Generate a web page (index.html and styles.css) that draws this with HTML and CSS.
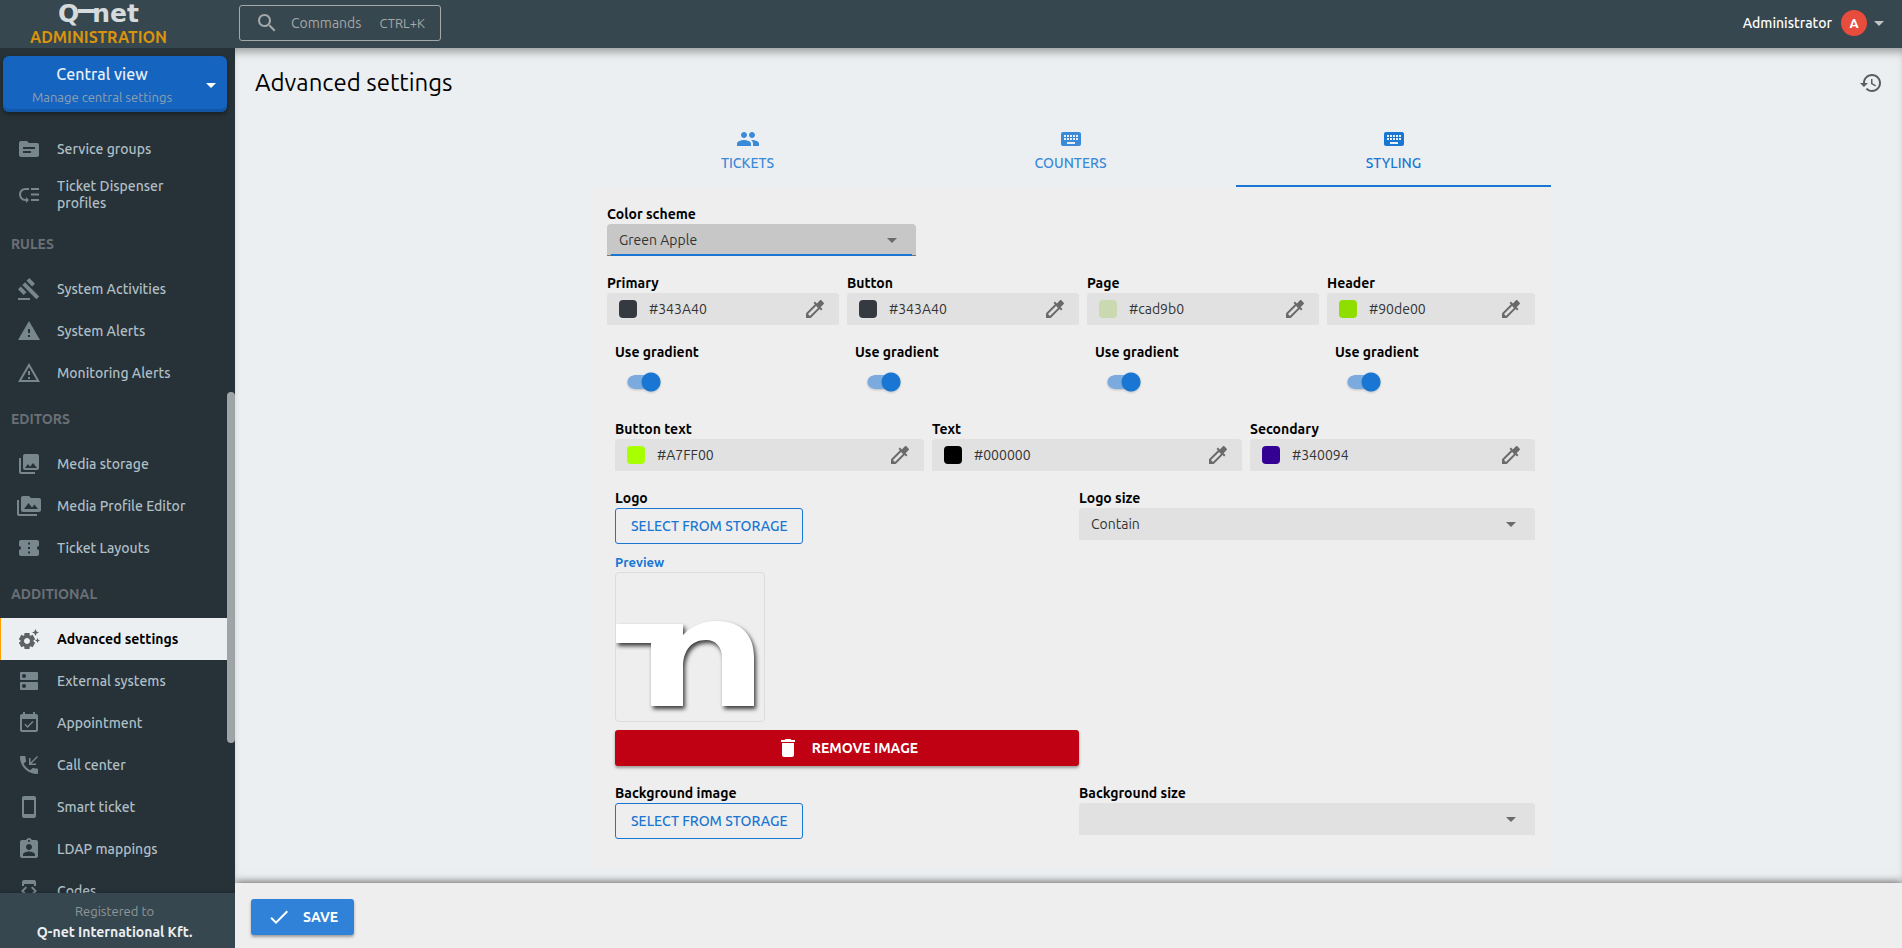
FILE: index.html
```html
<!DOCTYPE html>
<html lang="en">
<head>
<meta charset="utf-8">
<title>Advanced settings</title>
<link rel="stylesheet" href="styles.css">
</head>
<body>
<svg class="sprite" aria-hidden="true">
  <symbol id="picker" viewBox="0 0 24 24"><path d="M20.71 5.63l-2.34-2.34c-.39-.39-1.02-.39-1.41 0l-3.12 3.12-1.93-1.91-1.41 1.41 1.42 1.42L3 16.25V21h4.75l8.92-8.92 1.42 1.42 1.41-1.41-1.92-1.92 3.12-3.12c.4-.4.4-1.03.01-1.42zM6.92 19L5 17.08l8.06-8.06 1.92 1.92L6.92 19z"/></symbol>
  <symbol id="arrow" viewBox="0 0 24 24"><path d="M7 10l5 5 5-5z"/></symbol>
  <symbol id="keyboard" viewBox="0 0 24 24"><path d="M20 5H4c-1.1 0-1.99.9-1.99 2L2 17c0 1.1.9 2 2 2h16c1.1 0 2-.9 2-2V7c0-1.1-.9-2-2-2zm-9 3h2v2h-2V8zm0 3h2v2h-2v-2zM8 8h2v2H8V8zm0 3h2v2H8v-2zm-1 2H5v-2h2v2zm0-3H5V8h2v2zm9 7H8v-2h8v2zm0-4h-2v-2h2v2zm0-3h-2V8h2v2zm3 3h-2v-2h2v2zm0-3h-2V8h2v2z"/></symbol>
</svg>

<header class="topbar">
  <a class="brand" href="#">
    <span class="brand-logo" aria-label="Q-net">Q<span class="brand-dash"></span>net</span>
    <span class="brand-sub">ADMINISTRATION</span>
  </a>
  <button class="command" type="button">
    <svg class="icon" viewBox="0 0 24 24"><path d="M15.5 14h-.79l-.28-.27C15.41 12.59 16 11.11 16 9.5 16 5.91 13.09 3 9.5 3S3 5.91 3 9.5 5.91 16 9.5 16c1.61 0 3.09-.59 4.23-1.57l.27.28v.79l5 4.99L20.49 19l-4.99-5zm-6 0C7.01 14 5 11.99 5 9.5S7.01 5 9.5 5 14 7.01 14 9.5 11.99 14 9.5 14z"/></svg>
    <span class="command-name">Commands</span>
    <span class="command-key">CTRL+K</span>
  </button>
  <button class="user" type="button">
    <span>Administrator</span>
    <span class="avatar">A</span>
    <svg class="icon user-arrow"><use href="#arrow"/></svg>
  </button>
</header>

<div class="body">
  <aside class="sidebar">
    <button class="view-switch" type="button">
      <span class="view-text">
        <span class="view-name">Central view</span>
        <span class="view-hint">Manage central settings</span>
      </span>
      <svg class="icon"><use href="#arrow"/></svg>
    </button>
    <nav class="nav">
      <a class="nav-item" href="#"><svg class="icon" viewBox="0 0 24 24"><path d="M20 6h-8l-2-2H4c-1.1 0-1.99.9-1.99 2L2 18c0 1.1.9 2 2 2h16c1.1 0 2-.9 2-2V8c0-1.1-.9-2-2-2zm-6 10H6v-2h8v2zm4-4H6v-2h12v2z"/></svg><span>Service groups</span></a>
      <a class="nav-item nav-item-tall" href="#"><svg class="icon" viewBox="0 0 24 24"><path d="M14 5h8v2h-8zm0 5.500h8v2h-8zm0 5.500h8v2h-8zM2 11.500C2 15.080 4.920 18 8.500 18H9v2l3-3-3-3v2h-.5C6.020 16 4 13.980 4 11.500S6.020 7 8.500 7H12V5H8.500C4.920 5 2 7.920 2 11.500z"/></svg><span>Ticket Dispenser profiles</span></a>
      <h2 class="nav-title">RULES</h2>
      <a class="nav-item" href="#"><svg class="icon" viewBox="0 0 24 24"><path d="M1 21h12v2H1zM5.245 8.070l2.830-2.827 14.140 14.142-2.828 2.828zM12.317 1l5.657 5.656-2.830 2.830-5.654-5.660zM3.825 9.485l5.657 5.657-2.828 2.828-5.657-5.657z"/></svg><span>System Activities</span></a>
      <a class="nav-item" href="#"><svg class="icon" viewBox="0 0 24 24"><path d="M1 21h22L12 2 1 21zm12-3h-2v-2h2v2zm0-4h-2v-4h2v4z"/></svg><span>System Alerts</span></a>
      <a class="nav-item" href="#"><svg class="icon" viewBox="0 0 24 24"><path d="M12 5.990L19.530 19H4.470L12 5.990M12 2L1 21h22L12 2zm1 14h-2v2h2v-2zm0-6h-2v4h2v-4z"/></svg><span>Monitoring Alerts</span></a>
      <h2 class="nav-title">EDITORS</h2>
      <a class="nav-item" href="#"><svg class="icon" viewBox="0 0 24 24"><path d="M22 16V4c0-1.1-.9-2-2-2H8c-1.1 0-2 .9-2 2v12c0 1.1.9 2 2 2h12c1.1 0 2-.9 2-2zm-11-4l2.03 2.71L16 11l4 5H8l3-4zM2 6v14c0 1.1.9 2 2 2h14v-2H4V6H2z"/></svg><span>Media storage</span></a>
      <a class="nav-item" href="#"><svg class="icon" viewBox="0 0 24 24"><path d="M2 6H0v5h.01L0 20c0 1.1.9 2 2 2h18v-2H2V6zm20-2h-8l-2-2H6c-1.1 0-1.99.9-1.99 2L4 16c0 1.1.9 2 2 2h16c1.1 0 2-.9 2-2V6c0-1.1-.9-2-2-2zM7 15l4.5-6 3.5 4.51 2.5-3.01L21 15H7z"/></svg><span>Media Profile Editor</span></a>
      <a class="nav-item" href="#"><svg class="icon" viewBox="0 0 24 24"><path d="M22 10V6c0-1.11-.9-2-2-2H4c-1.1 0-1.99.89-1.99 2v4c1.1 0 1.99.9 1.99 2s-.89 2-2 2v4c0 1.1.9 2 2 2h16c1.1 0 2-.9 2-2v-4c-1.1 0-2-.9-2-2s.9-2 2-2zm-9 7.5h-2v-2h2v2zm0-4.5h-2v-2h2v2zm0-4.5h-2v-2h2v2z"/></svg><span>Ticket Layouts</span></a>
      <h2 class="nav-title">ADDITIONAL</h2>
      <a class="nav-item nav-item-active" href="#" aria-current="page"><svg class="icon" viewBox="0 0 24 24"><path d="M17.41 6.59L15 5.5l2.41-1.09L18.5 2l1.09 2.41L22 5.5l-2.41 1.09L18.5 9l-1.09-2.41zm3.87 6.13L20.5 11l-.78 1.72-1.72.78 1.72.78.78 1.72.78-1.72L23 13.5l-1.72-.78zm-5.04 1.65l1.94 1.47-2.5 4.33-2.24-.94c-.2.13-.42.26-.64.37l-.3 2.4h-5l-.3-2.41c-.22-.11-.43-.23-.64-.37l-2.24.94-2.5-4.33 1.94-1.47c-.01-.11-.01-.24-.01-.36s0-.25.01-.37l-1.94-1.47 2.5-4.33 2.24.94c.2-.13.42-.26.64-.37L7.5 6h5l.3 2.41c.22.11.43.23.64.37l2.24-.94 2.5 4.33-1.94 1.47c.01.12.01.24.01.37s0 .24-.01.36zM13 14c0-1.66-1.34-3-3-3s-3 1.34-3 3 1.34 3 3 3 3-1.34 3-3z"/></svg><span>Advanced settings</span></a>
      <a class="nav-item" href="#"><svg class="icon" viewBox="0 0 24 24"><path d="M20 13H4c-.55 0-1 .45-1 1v6c0 .55.45 1 1 1h16c.55 0 1-.45 1-1v-6c0-.55-.45-1-1-1zM7 19c-1.1 0-2-.9-2-2s.9-2 2-2 2 .9 2 2-.9 2-2 2zM20 3H4c-.55 0-1 .45-1 1v6c0 .55.45 1 1 1h16c.55 0 1-.45 1-1V4c0-.55-.45-1-1-1zM7 9c-1.1 0-2-.9-2-2s.9-2 2-2 2 .9 2 2-.9 2-2 2z"/></svg><span>External systems</span></a>
      <a class="nav-item" href="#"><svg class="icon" viewBox="0 0 24 24"><path d="M16.53 11.06L15.47 10l-4.88 4.88-2.12-2.12-1.06 1.06L10.59 17l5.94-5.94zM19 3h-1V1h-2v2H8V1H6v2H5c-1.11 0-1.99.9-1.99 2L3 19c0 1.1.89 2 2 2h14c1.1 0 2-.9 2-2V5c0-1.1-.9-2-2-2zm0 16H5V8h14v11z"/></svg><span>Appointment</span></a>
      <a class="nav-item" href="#"><svg class="icon" viewBox="0 0 24 24"><path d="M20 15.5c-1.25 0-2.45-.2-3.57-.57-.35-.11-.74-.03-1.02.24l-2.2 2.2c-2.83-1.44-5.15-3.75-6.59-6.58l2.2-2.21c.28-.27.36-.66.25-1.01C8.7 6.45 8.5 5.25 8.5 4c0-.55-.45-1-1-1H4c-.55 0-1 .45-1 1 0 9.39 7.61 17 17 17 .55 0 1-.45 1-1v-3.5c0-.55-.45-1-1-1zM20.900 4L20 3.100l-6.500 6.400V5H12v7h7v-1.500h-4.500z"/></svg><span>Call center</span></a>
      <a class="nav-item" href="#"><svg class="icon" viewBox="0 0 24 24"><path d="M17 1.010L7 1c-1.100 0-1.990.9-1.990 2v18c0 1.100.89 2 1.990 2h10c1.100 0 2-.9 2-2V3c0-1.100-.9-1.990-2-1.990zM17 19H7V5h10v14z"/></svg><span>Smart ticket</span></a>
      <a class="nav-item" href="#"><svg class="icon" viewBox="0 0 24 24"><path d="M19 3h-4.180C14.400 1.840 13.300 1 12 1c-1.300 0-2.400.84-2.820 2H5c-1.100 0-2 .9-2 2v14c0 1.100.9 2 2 2h14c1.100 0 2-.9 2-2V5c0-1.100-.9-2-2-2zm-7 0c.55 0 1 .45 1 1s-.45 1-1 1-1-.45-1-1 .45-1 1-1zm0 4c1.660 0 3 1.340 3 3s-1.340 3-3 3-3-1.340-3-3 1.340-3 3-3zm6 12H6v-1.400c0-2 4-3.100 6-3.100s6 1.100 6 3.100V19z"/></svg><span>LDAP mappings</span></a>
      <a class="nav-item" href="#"><svg class="icon" viewBox="0 0 24 24"><path d="M7 5h10v2h2V3c0-1.100-.9-1.990-2-1.990L7 1c-1.100 0-2 .9-2 2v4h2V5zm8.410 11.590L20 12l-4.590-4.590L14 8.830 17.170 12 14 15.170l1.410 1.420zM10 15.170L6.830 12 10 8.830 8.590 7.410 4 12l4.590 4.590L10 15.170zM17 19H7v-2H5v4c0 1.100.9 2 2 2h10c1.100 0 2-.9 2-2v-4h-2v2z"/></svg><span>Codes</span></a>
    </nav>
    <div class="scroll-thumb"></div>
    <footer class="license">
      <span class="license-hint">Registered to</span>
      <span class="license-name">Q-net International Kft.</span>
    </footer>
  </aside>

  <main class="main">
    <div class="scroll">
      <div class="page-head">
        <h1 class="page-title">Advanced settings</h1>
        <button class="icon-button" type="button" aria-label="History"><svg class="icon" viewBox="0 0 24 24"><path d="M13 3c-4.970 0-9 4.030-9 9H1l3.890 3.890.07.14L9 12H6c0-3.870 3.130-7 7-7s7 3.130 7 7-3.130 7-7 7c-1.930 0-3.680-.79-4.940-2.060l-1.420 1.420C8.270 19.990 10.510 21 13 21c4.970 0 9-4.030 9-9s-4.030-9-9-9zm-1 5v5l4.280 2.540.72-1.210-3.500-2.080V8H12z"/></svg></button>
      </div>

      <div class="content">
        <div class="tabs" role="tablist">
          <button class="tab" type="button" role="tab"><svg class="icon" viewBox="0 0 24 24"><path d="M16 11c1.66 0 2.99-1.34 2.99-3S17.66 5 16 5c-1.66 0-3 1.34-3 3s1.34 3 3 3zm-8 0c1.66 0 2.99-1.34 2.99-3S9.66 5 8 5C6.34 5 5 6.34 5 8s1.34 3 3 3zm0 2c-2.33 0-7 1.17-7 3.5V19h14v-2.5c0-2.33-4.67-3.5-7-3.5zm8 0c-.29 0-.62.02-.97.05 1.16.84 1.97 1.97 1.97 3.45V19h6v-2.5c0-2.33-4.67-3.5-7-3.5z"/></svg><span>TICKETS</span></button>
          <button class="tab" type="button" role="tab"><svg class="icon"><use href="#keyboard"/></svg><span>COUNTERS</span></button>
          <button class="tab tab-active" type="button" role="tab" aria-selected="true"><svg class="icon"><use href="#keyboard"/></svg><span>STYLING</span></button>
        </div>

        <form class="panel">
          <div class="row row-scheme">
            <div class="field">
              <label class="label" for="scheme">Color scheme</label>
              <div class="box box-focus"><select class="select" id="scheme"><option>Green Apple</option></select><svg class="icon"><use href="#arrow"/></svg></div>
            </div>
          </div>

          <div class="row row-four">
            <div class="field">
              <label class="label" for="primary">Primary</label>
              <div class="box"><span class="swatch swatch-slate"></span><input class="input" id="primary" type="text" value="#343A40"><svg class="icon"><use href="#picker"/></svg></div>
              <div class="toggle"><label class="label" for="g1">Use gradient</label><input class="switch" id="g1" type="checkbox" checked></div>
            </div>
            <div class="field">
              <label class="label" for="button">Button</label>
              <div class="box"><span class="swatch swatch-slate"></span><input class="input" id="button" type="text" value="#343A40"><svg class="icon"><use href="#picker"/></svg></div>
              <div class="toggle"><label class="label" for="g2">Use gradient</label><input class="switch" id="g2" type="checkbox" checked></div>
            </div>
            <div class="field">
              <label class="label" for="page">Page</label>
              <div class="box"><span class="swatch swatch-sage"></span><input class="input" id="page" type="text" value="#cad9b0"><svg class="icon"><use href="#picker"/></svg></div>
              <div class="toggle"><label class="label" for="g3">Use gradient</label><input class="switch" id="g3" type="checkbox" checked></div>
            </div>
            <div class="field">
              <label class="label" for="header">Header</label>
              <div class="box"><span class="swatch swatch-apple"></span><input class="input" id="header" type="text" value="#90de00"><svg class="icon"><use href="#picker"/></svg></div>
              <div class="toggle"><label class="label" for="g4">Use gradient</label><input class="switch" id="g4" type="checkbox" checked></div>
            </div>
          </div>

          <div class="inner">
            <div class="row row-three">
              <div class="field">
                <label class="label" for="button-text">Button text</label>
                <div class="box"><span class="swatch swatch-lime"></span><input class="input" id="button-text" type="text" value="#A7FF00"><svg class="icon"><use href="#picker"/></svg></div>
              </div>
              <div class="field">
                <label class="label" for="text">Text</label>
                <div class="box"><span class="swatch swatch-black"></span><input class="input" id="text" type="text" value="#000000"><svg class="icon"><use href="#picker"/></svg></div>
              </div>
              <div class="field">
                <label class="label" for="secondary">Secondary</label>
                <div class="box"><span class="swatch swatch-violet"></span><input class="input" id="secondary" type="text" value="#340094"><svg class="icon"><use href="#picker"/></svg></div>
              </div>
            </div>

            <div class="row row-two">
              <div class="field">
                <label class="label" for="logo">Logo</label>
                <button class="outline-button" id="logo" type="button">SELECT FROM STORAGE</button>
                <span class="preview-label">Preview</span>
                <div class="preview">
                  <svg class="preview-image" viewBox="0 0 148 148" role="img" aria-label="Logo preview"><path d="M-2 51H67V62C76 53 87 48 101 48C125 48 138 62 138 84V133H106V85C106 74 100 67 90 67C75 67 67 78 67 94V133H35V70H-2Z"/></svg>
                </div>
                <button class="remove-button" type="button"><svg class="icon" viewBox="0 0 24 24"><path d="M6 19c0 1.1.9 2 2 2h8c1.1 0 2-.9 2-2V7H6v12zM19 4h-3.5l-1-1h-5l-1 1H5v2h14V4z"/></svg><span>REMOVE IMAGE</span></button>
              </div>
              <div class="field">
                <label class="label" for="logo-size">Logo size</label>
                <div class="box"><select class="select" id="logo-size"><option>Contain</option></select><svg class="icon"><use href="#arrow"/></svg></div>
              </div>
            </div>

            <div class="row row-two">
              <div class="field">
                <label class="label" for="background">Background image</label>
                <button class="outline-button" id="background" type="button">SELECT FROM STORAGE</button>
              </div>
              <div class="field">
                <label class="label" for="background-size">Background size</label>
                <div class="box"><select class="select" id="background-size"><option></option></select><svg class="icon"><use href="#arrow"/></svg></div>
              </div>
            </div>
          </div>
        </form>
      </div>
    </div>
    <div class="actions">
      <button class="save-button" type="button"><svg class="icon" viewBox="0 0 24 24"><path d="M9 16.170L4.830 12l-1.420 1.410L9 19 21 7l-1.410-1.410z"/></svg><span>SAVE</span></button>
    </div>
  </main>
</div>
</body>
</html>
```
FILE: styles.css
```css
* { box-sizing: border-box; }

body {
  margin: 0;
  height: 100vh;
  display: flex;
  flex-direction: column;
  overflow: hidden;
  background: #eceff1;
  color: #000;
  font-family: Ubuntu, "Noto Sans", sans-serif;
  font-size: 14px;
  line-height: 18px;
}

button, input, select { font: inherit; color: inherit; margin: 0; }
button { border: 0; padding: 0; background: none; cursor: pointer; }
a { color: inherit; text-decoration: none; }

.sprite { display: none; }
.icon { width: 24px; height: 24px; flex: none; fill: currentColor; }

/* Top bar */
.topbar {
  position: relative;
  z-index: 2;
  flex: none;
  height: 48px;
  display: flex;
  align-items: center;
  padding-right: 11px;
  background: #37474f;
  color: #fff;
}
.brand {
  width: 239px;
  padding: 0 42px 0 0;
  display: flex;
  flex-direction: column;
  align-items: center;
}
.brand-logo {
  display: flex;
  font: bold 25px/26px "DejaVu Sans", sans-serif;
  color: #d5dadc;
}
.brand-dash { width: 17px; height: 4px; margin: 8px -3px 0 -1px; background: currentColor; }
.brand-sub { font-size: 16px; font-weight: 700; line-height: 20px; color: #d9930d; }
.command {
  height: 36px;
  width: 202px;
  margin-bottom: 2px;
  padding: 0 15px;
  display: flex;
  align-items: center;
  border: 1px solid #a5a8a8;
  border-radius: 3px;
  color: #a5a8a8;
}
.command-name { margin: 0 auto 0 12px; }
.command-key { font-size: 13px; }
.user {
  margin: 0 0 2px auto;
  display: flex;
  align-items: center;
  font-weight: 500;
}
.avatar {
  width: 26px;
  height: 26px;
  margin-left: 9px;
  border-radius: 50%;
  background: #e74c3c;
  font-size: 13px;
  font-weight: 700;
  line-height: 26px;
}
.user-arrow { color: #bfc4c6; }

.body { flex: 1; min-height: 0; display: flex; }

/* Sidebar */
.sidebar {
  position: relative;
  width: 235px;
  flex: none;
  display: flex;
  flex-direction: column;
  background: #263238;
  color: #b0bec5;
}
.view-switch {
  flex: none;
  height: 56px;
  margin: 8px 8px 16px 3px;
  padding: 2px 4px 0 2px;
  display: flex;
  align-items: center;
  border-radius: 6px;
  background: #1565c0;
  box-shadow: inset 0 -3px 0 #1256a4, 0 2px 4px rgba(0, 0, 0, .4);
  color: #fff;
}
.view-text { flex: 1; display: flex; flex-direction: column; }
.view-name { font-size: 16px; font-weight: 500; line-height: 24px; color: #e8eff8; }
.view-hint { font-size: 13px; line-height: 22px; color: #8f9fae; }
.nav { flex: 1; min-height: 0; overflow: hidden; margin-right: 8px; }
.nav-item {
  min-height: 42px;
  padding: 0 60px 0 17px;
  display: flex;
  align-items: center;
  gap: 16px;
  font-weight: 500;
  line-height: 17px;
}
.nav-item .icon { color: #78868e; }
.nav-item span { flex: 1; white-space: nowrap; }
.nav-item-tall { min-height: 49px; }
.nav-item-tall span { white-space: normal; }
.nav-item-active {
  padding-left: 16px;
  border-left: 1px solid #ffa000;
  background: #eceff1;
  color: #000;
  font-weight: 700;
}
.nav-item-active .icon { color: #5f6162; }
.nav-title {
  margin: 0;
  padding: 1px 0 0 11px;
  font-size: 14px;
  font-weight: 700;
  line-height: 48px;
  color: #6b6f76;
}
.scroll-thumb {
  position: absolute;
  top: calc(38% + 2px);
  right: 0;
  width: 8px;
  height: 39%;
  border-radius: 4px;
  background: #9fa4a7;
}
.license {
  flex: none;
  height: 55px;
  display: flex;
  flex-direction: column;
  align-items: center;
  justify-content: center;
  padding: 3px 6px 0 0;
  background: #37474f;
  box-shadow: 0 0 4px rgba(0, 0, 0, .3);
}
.license-hint { font-size: 13px; line-height: 20px; color: #8f979a; }
.license-name { font-weight: 700; line-height: 22px; color: #eceff1; }

/* Main column */
.main { flex: 1; min-width: 0; display: flex; flex-direction: column; box-shadow: inset 0 8px 8px -4px rgba(0, 0, 0, .35); }
.scroll { flex: 1; min-height: 0; overflow: hidden; }
.page-head {
  height: 70px;
  padding: 0 19px 0 20px;
  display: flex;
  align-items: center;
  justify-content: space-between;
}
.page-title { margin: 0; font-size: 24px; font-weight: 400; line-height: 32px; }
.icon-button { display: flex; color: #5a5c5e; }
.content { max-width: 965px; margin: 0 auto; padding-left: 4px; }

.tabs { display: grid; grid-template-columns: repeat(3, 1fr); gap: 8px; }
.tab {
  height: 69px;
  padding-top: 9px;
  display: flex;
  flex-direction: column;
  align-items: center;
  border-bottom: 2px solid transparent;
  color: #3b8ad9;
  font-weight: 500;
  line-height: 24px;
}
.tab-active { border-color: #1976d2; color: #1976d2; }

.panel { padding: 17px 16px 12px 17px; background: #eee; }
.inner { padding-left: 8px; }
.row { display: grid; gap: 8px; margin-bottom: 17px; }
.row-scheme { grid-template-columns: 309fr 611fr; }
.row-four { grid-template-columns: 232fr 232fr 232fr 208fr; margin-bottom: 27px; }
.row-three { grid-template-columns: 309fr 310fr 285fr; }
.row-two { grid-template-columns: 464fr 456fr; gap: 0; }
.field { min-width: 0; }
.label { display: block; font-weight: 700; line-height: 20px; }
.box {
  height: 32px;
  padding: 0 12px;
  display: flex;
  align-items: center;
  border-radius: 4px 4px 0 0;
  background: #e1e1e1;
}
.box .icon { color: #6a6a6a; pointer-events: none; }
.box-focus {
  background: linear-gradient(#1976d2, #1976d2) center bottom / calc(100% - 8px) 2px no-repeat, linear-gradient(#777, #777) bottom / 100% 1px no-repeat, #c7c7c7;
}
.select, .input {
  flex: 1;
  min-width: 0;
  height: 32px;
  padding: 0;
  border: 0;
  outline: 0;
  background: none;
  color: #333;
}
.select { appearance: none; }
.swatch { width: 18px; height: 18px; margin-right: 12px; flex: none; border-radius: 4px; }
.swatch-slate { background: #343a40; }
.swatch-sage { background: #cad9b0; }
.swatch-apple { background: #90de00; }
.swatch-lime { background: #a7ff00; }
.swatch-black { background: #000; }
.swatch-violet { background: #340094; }

.toggle { padding: 17px 0 0 8px; }
.switch {
  appearance: none;
  display: block;
  width: 34px;
  height: 20px;
  margin: 10px 0 0 12px;
  background:
    radial-gradient(circle at 24px 10px, #1976d2 9px, transparent 10px),
    linear-gradient(#7baade, #7baade) 7px 3px / 20px 14px no-repeat,
    radial-gradient(circle at 7px 10px, #7baade 6px, transparent 7px);
  filter: drop-shadow(0 1px 1px rgba(0, 0, 0, .2));
}

.outline-button {
  display: block;
  height: 36px;
  padding: 0 15px;
  border: 1px solid #1976d2;
  border-radius: 3px;
  color: #1976d2;
  font-weight: 500;
}
.preview-label { display: block; padding: 9px 0 1px; font-size: 13px; font-weight: 700; color: #1976d2; }
.preview { width: 150px; height: 150px; overflow: hidden; border: 1px solid #dcdcdc; border-radius: 4px; }
.preview-image { display: block; fill: #fff; filter: drop-shadow(2px 3px 2px rgba(0, 0, 0, .75)); }
.remove-button, .save-button {
  height: 36px;
  display: flex;
  align-items: center;
  justify-content: center;
  gap: 12px;
  border-radius: 3px;
  box-shadow: 0 2px 3px rgba(0, 0, 0, .35);
  color: #fff;
  font-weight: 700;
}
.remove-button { width: 100%; margin-top: 8px; background: #c00013; }

.actions {
  position: relative;
  flex: none;
  height: 65px;
  padding: 16px;
  background: #eee;
  box-shadow: 0 -1px 8px rgba(0, 0, 0, .6);
  clip-path: inset(-16px 0 0 0);
}
.save-button { padding: 0 16px; background: #2f82d7; }
```
